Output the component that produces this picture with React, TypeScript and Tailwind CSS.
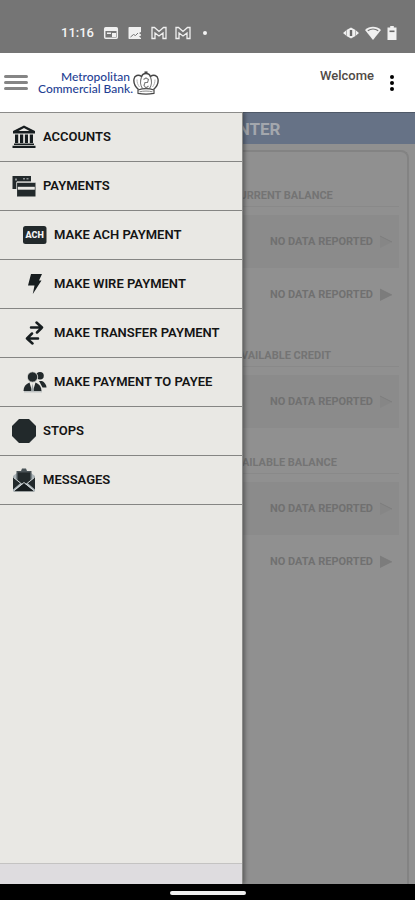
import React, { useState } from 'react';

interface MenuItem {
  label: string;
  icon: React.ReactNode;
  nested?: boolean;
}

interface Section {
  title: string;
  rows: { shaded: boolean }[];
}

const BankIcon = () => (
  <svg viewBox="0 0 24 24" className="size-6" fill="#171d1f">
    <path fillRule="evenodd" d="M12 .5 23 6v2.500H1V6zM12 3 6.500 6h11z" />
    <path d="M3 9.500h3.200V18H3zM8 9.500h3.200V18H8zM12.900 9.500H16V18h-3.100zM17.800 9.500H21V18h-3.200z" />
    <path d="M2 18.600h20v1.400H2zM.5 20.700h23V23H.5z" />
  </svg>
);

const PaymentsIcon = () => (
  <svg viewBox="0 0 24 24" className="size-6">
    <path d="M.5 2h18.500v5.500H5V15H.5z" fill="#22292b" />
    <path d="M3 4.500h2v2H3zM11 4h2v1.500h-2zM14.500 4h2v1.500h-2z" fill="#8b9092" />
    <rect x="5" y="8.500" width="18.500" height="14" fill="#22292b" />
    <path d="M5.800 12.800h17v2.900h-17z" fill="#e9e8e4" />
    <path d="M4.600 8.200H23.500M4.600 8.200V22" stroke="#e9e8e4" strokeWidth=".8" />
  </svg>
);

const AchIcon = () => (
  <svg viewBox="0 0 24 24" className="size-6">
    <rect x="0" y="3" width="23.500" height="18" rx="2.500" fill="#22292b" />
    <text
      x="11.700"
      y="15"
      textAnchor="middle"
      fontFamily="Roboto, sans-serif"
      fontSize="9"
      fontWeight="900"
      fill="#f2f2f2"
    >
      ACH
    </text>
  </svg>
);

const BoltIcon = () => (
  <svg viewBox="0 0 24 24" className="size-6" fill="#171d1f">
    <path d="M8 2h11l-3 6.500H18.500L9.800 22l1.700-8.500H5z" />
  </svg>
);

const TransferIcon = () => (
  <svg
    viewBox="0 0 24 24"
    className="size-6"
    fill="none"
    stroke="#171d1f"
    strokeWidth="2.500"
    strokeLinecap="round"
    strokeLinejoin="round"
  >
    <path d="M8 6.500h11M13.500 1.500l5.500 5-5 5" />
    <path d="M15 17.500H4M9 12.500l-5 5 5.500 5" />
  </svg>
);

const PayeeIcon = () => (
  <svg viewBox="0 0 24 24" className="size-6" fill="#22292b">
    <circle cx="17" cy="5.800" r="3.800" />
    <path d="M16 11h3c2.500 1 4.500 4 4.500 6.500h-4z" />
    <circle cx="9.500" cy="7" r="5.200" stroke="#e9e8e4" strokeWidth=".8" />
    <path d="M.5 21c0-4 2-7 6-8.500L9 21zM18.500 21c0-4-2-7-6-8.500L10 21z" />
    <path d="M9.500 13.500 11 21H8z" fill="#9aa1a4" />
    <path d="M1 21.800h18" stroke="#9aa1a4" strokeWidth=".8" />
  </svg>
);

const StopIcon = () => (
  <svg viewBox="0 0 24 24" className="size-6">
    <path d="M7.300 1h10L24 8v9.500L17.500 24H8z" fill="#a9adae" />
    <path d="M7 0h10l7 7v10l-7 7H7l-7-7V7z" fill="#22292b" />
  </svg>
);

const MessagesIcon = () => (
  <svg viewBox="0 0 24 24" className="size-6">
    <path d="M1 8 5 5h14l4 3v15.500H1z" fill="#a9b2b6" />
    <path d="M4.500 3H9l1-2.500h4L15 3h4.500v11h-15z" fill="#4a5357" />
    <path d="M6 4.500h12v9l-6 3-6-3z" fill="#22292b" />
    <path d="M1 9l7.500 6L1 21.500zM23 9l-7.500 6 7.500 6.500z" fill="#22292b" />
    <path d="M2 23.200 12 15l10 8.200z" fill="#171d1f" />
    <path d="m1.500 9.500 7 5.500M22.500 9.500l-7 5.500M2 22.500l10-8 10 8" stroke="#d3d8da" fill="none" />
  </svg>
);

const Crest = () => (
  <svg viewBox="0 0 26 24" className="h-6 w-[26px]" fill="none" stroke="#454545" strokeWidth="1.400">
    <path d="M5.500 18.500C1.500 15 .5 11 1 8c.5-3.500 4.500-5 7.500-2.500" />
    <path d="M20.500 18.500C24.500 15 25.500 11 25 8c-.5-3.500-4.500-5-7.500-2.500" />
    <path d="M8.500 6c.5-2.500 2.500-3.500 4.500-3.500s4 1 4.500 3.500" />
    <path d="M11.500 1.200h3" strokeWidth="1.600" />
    <path d="M5 19c5-1.600 11-1.600 16 0v3.300c-5 1-11 1-16 0z" strokeWidth="1.200" />
    <path d="M6.500 20.800c4-1 9-1 13 0" stroke="#8a8a8a" strokeWidth="1" />
    <path d="M8.500 6C7 10 7.500 15 9.500 17.500M17.500 6c1.500 4 1 9-1 11.500" stroke="#666" strokeWidth="1.100" />
    <path d="M10.500 8.500 13 7l2.500 1.500-1 3H12l-1 3 2 2.500 2.500-2" stroke="#7d7d7d" strokeWidth="1.100" />
    <path d="M4 8.500c0 3 .8 5.500 2.500 7.500M22 8.500c0 3-.8 5.500-2.500 7.500" stroke="#b5b5b5" strokeWidth="1" />
  </svg>
);

const menuItems: MenuItem[] = [
  { label: 'ACCOUNTS', icon: <BankIcon /> },
  { label: 'PAYMENTS', icon: <PaymentsIcon /> },
  { label: 'MAKE ACH PAYMENT', icon: <AchIcon />, nested: true },
  { label: 'MAKE WIRE PAYMENT', icon: <BoltIcon />, nested: true },
  { label: 'MAKE TRANSFER PAYMENT', icon: <TransferIcon />, nested: true },
  { label: 'MAKE PAYMENT TO PAYEE', icon: <PayeeIcon />, nested: true },
  { label: 'STOPS', icon: <StopIcon /> },
  { label: 'MESSAGES', icon: <MessagesIcon /> }
];

const sections: Section[] = [
  { title: 'CURRENT BALANCE', rows: [{ shaded: true }, { shaded: false }] },
  { title: 'AVAILABLE CREDIT', rows: [{ shaded: true }] },
  { title: 'AVAILABLE BALANCE', rows: [{ shaded: true }, { shaded: false }] }
];

const MailGlyph = () => (
  <svg viewBox="0 0 16 14" className="h-[14px] w-4" fill="none" stroke="#f0f0f0" strokeWidth="1.300">
    <path d="M1 12.500v-11h2.500L8 5.500l4.500-4H15v11h-3V7L8 10 4 7v5.500z" />
  </svg>
);

const StatusBar = () => (
  <div className="flex h-[53px] items-end bg-[#757575] pr-[18px] pb-3 pl-[61px] text-[#f4f4f4]">
    <span className="w-[42px] text-[13px] leading-4 font-medium">11:16</span>
    <div className="flex h-4 items-center gap-2">
      <svg viewBox="0 0 16 14" className="h-[14px] w-4">
        <rect x="1.700" y="1.700" width="12.600" height="10.600" rx="1" fill="none" stroke="#f0f0f0" strokeWidth="1.500" />
        <path d="M2 2h12v3H2zM4 6.500h4V8H4zM9 7h4v4H9z" fill="#f0f0f0" />
      </svg>
      <svg viewBox="0 0 16 14" className="h-[14px] w-4">
        <path d="M2.500 1H14v5l-2 1 2 1.500v1l-2 1 2 1.500v1H2.500c-.8 0-1-.5-1-1V2c0-.6.300-1 1-1z" fill="#f0f0f0" />
        <path d="m3.500 11 3-2.500 2 1 2.500-2.500" fill="none" stroke="#757575" />
      </svg>
      <MailGlyph />
      <MailGlyph />
      <span className="ml-1 size-1 rounded-full bg-[#f4f4f4]" />
    </div>
    <div className="ml-auto flex h-4 items-center gap-[6px]">
      <svg viewBox="0 0 16 14" className="h-[14px] w-4">
        <path d="M0 7l3-2.500v5zM16 7l-3-2.500v5z" fill="#f0f0f0" />
        <path d="M3.500 4 8 1.500 12.500 4v6L8 12.500 3.500 10z" fill="#f0f0f0" />
        <path d="M6.800 4h2.400v6H6.800z" fill="#686868" />
      </svg>
      <svg viewBox="0 0 16 14" className="h-[14px] w-4">
        <path d="M0 4C4.500-.3 11.500-.3 16 4L8 14z" fill="#f0f0f0" />
        <path d="M2.800 4.800c3-2.400 7.400-2.400 10.400 0" fill="none" stroke="#757575" strokeWidth="1.200" />
      </svg>
      <svg viewBox="0 0 10 14" className="h-[14px] w-[10px]">
        <path d="M3.200 0h3.600v1.500H9.500V14H.5V1.500h2.700z" fill="#f0f0f0" />
        <path d="M2.500 4.500h5v1.600h-5z" fill="#686868" />
      </svg>
    </div>
  </div>
);

const AppHeader: React.FC<{ onToggle: () => void }> = ({ onToggle }) => (
  <header className="flex h-[59px] items-center bg-white pr-[17px] pl-1">
    <button type="button" aria-label="Menu" onClick={onToggle} className="flex flex-col gap-[3px]">
      <span className="h-[3px] w-6 rounded-full bg-[#858585]" />
      <span className="h-[3px] w-6 rounded-full bg-[#858585]" />
      <span className="h-[3px] w-6 rounded-full bg-[#858585]" />
    </button>
    <a href="#home" className="ml-[10px] flex items-center">
      <span className="flex flex-col text-right font-[Lato,sans-serif] text-xs leading-3 font-medium text-[#1f3f94]">
        <span className="pr-[3px]">Metropolitan</span>
        <span>Commercial Bank.</span>
      </span>
      <Crest />
    </a>
    <div className="ml-auto flex items-center gap-3">
      <span className="pb-[14px] text-[13px] leading-4 font-medium text-[#514a46]">Welcome</span>
      <button type="button" aria-label="More options" className="flex w-3 flex-col items-center gap-[2px]">
        <span className="size-1 rounded-full bg-black" />
        <span className="size-1 rounded-full bg-black" />
        <span className="size-1 rounded-full bg-black" />
      </button>
    </div>
  </header>
);

const AccountCenter = () => (
  <main className="flex flex-1 flex-col bg-[#909090]">
    <h1 className="h-8 border-t border-[#4f5968] bg-[#667286] text-center text-[17px] leading-8 font-bold text-[#a3a7ad]">
      ACCOUNT CENTER
    </h1>
    <div className="mx-[6px] mt-[6px] flex-1 rounded-t-lg border-x-2 border-t-2 border-[#838383] px-2 pt-[9px]">
      {sections.map(section => (
        <section key={section.title}>
          <h2 className="mb-2 flex h-[46px] items-end justify-center border-b border-[#898989] pb-[2px] pl-[150px] text-[11px] leading-4 font-bold text-[#747474]">
            {section.title}
          </h2>
          {section.rows.map((row, i) => (
            <button
              key={i}
              type="button"
              className={`flex h-[53px] w-full items-center justify-end gap-[6px] pr-[6px] text-[11px] leading-4 font-bold text-[#707070] ${
                row.shaded ? 'bg-[#8b8b8b]' : ''
              }`}
            >
              NO DATA REPORTED
              <svg viewBox="0 0 14 14" className="size-[14px]">
                <path d="M1 1l12 6-12 6z" fill={row.shaded ? '#868686' : '#7c7c7c'} />
                <path d="M1 1l12 6" fill="none" stroke="#7a7a7a" strokeWidth=".8" />
              </svg>
            </button>
          ))}
        </section>
      ))}
    </div>
  </main>
);

const Drawer = () => (
  <nav className="absolute inset-y-0 left-0 flex w-[243px] flex-col border-t border-r border-[#8b8b89] bg-[#e9e8e4] shadow-[2px_0_4px_rgba(0,0,0,0.35)]">
    <ul className="flex-1">
      {menuItems.map(item => (
        <li key={item.label} className="border-b border-[#858583]">
          <a
            href="#menu"
            className={`flex h-12 items-center gap-[7px] text-[13px] leading-4 font-semibold text-[#141414] ${
              item.nested ? 'pl-[23px]' : 'pl-3'
            }`}
          >
            {item.icon}
            {item.label}
          </a>
        </li>
      ))}
    </ul>
    <div className="h-[21px] border-t border-[#c4c3c2] bg-[#dedcdf]" />
  </nav>
);

export default function App() {
  const [open, setOpen] = useState(true);

  return (
    <div className="flex min-h-screen flex-col bg-black font-[Roboto,sans-serif]">
      <StatusBar />
      <AppHeader onToggle={() => setOpen(prev => !prev)} />
      <div className="relative flex flex-1 flex-col overflow-hidden">
        <AccountCenter />
        {open && <Drawer />}
      </div>
      {/* Gesture bar */}
      <div className="flex h-4 items-center justify-center bg-black pt-[2px]">
        <span className="h-1 w-[76px] rounded-full bg-[#f0f0f0]" />
      </div>
    </div>
  );
}
